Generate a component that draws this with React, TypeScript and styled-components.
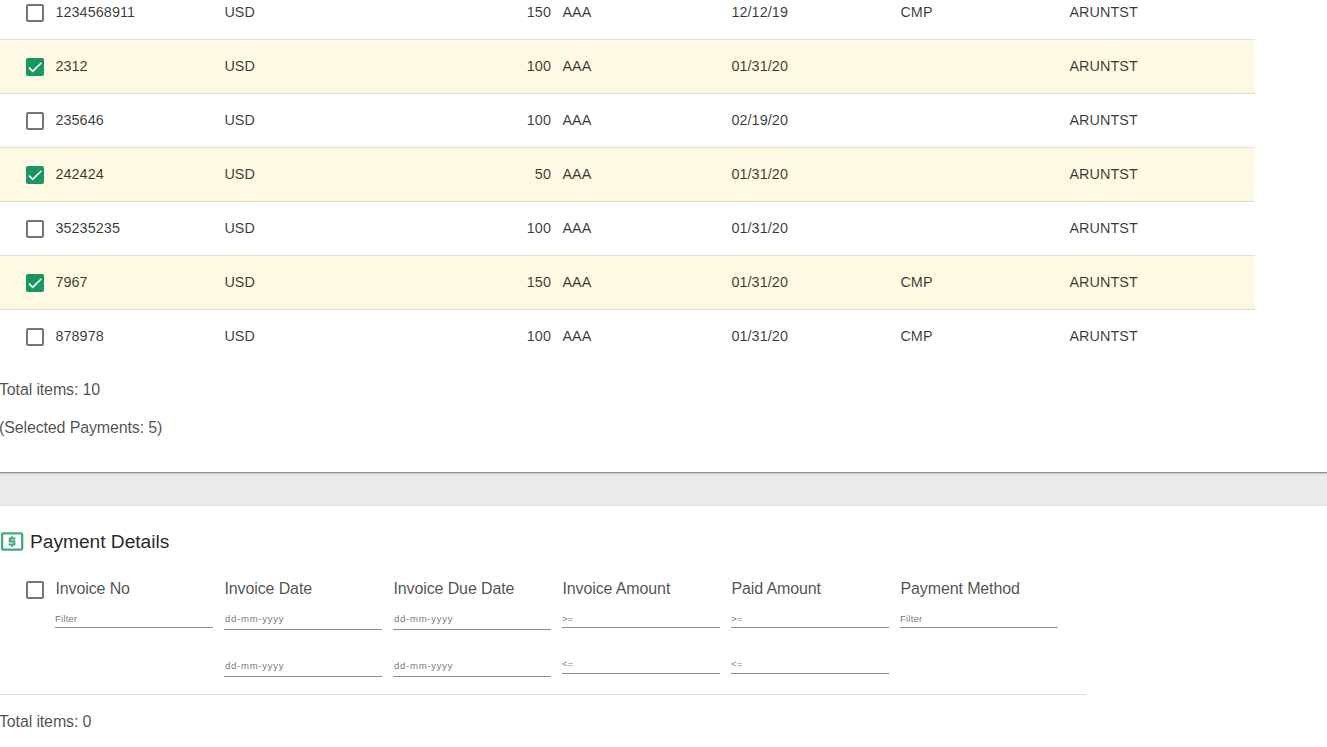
import React from 'react';
import styled, { createGlobalStyle } from 'styled-components';

const GlobalStyle = createGlobalStyle`
  * { box-sizing: border-box; }
  body {
    margin: 0;
    overflow: hidden;
    background: #eaeaea;
    color: rgba(0, 0, 0, 0.87);
    font-family: "Liberation Sans", Arial, sans-serif;
  }
`;

const Page = styled.main`
  height: 747px;
  overflow: hidden;
  display: flex;
  flex-direction: column;
  gap: 34px;
`;

const Card = styled.section<{ $height: number }>`
  flex: none;
  height: ${(p) => p.$height}px;
  overflow: clip;
  background: #fff;
  box-shadow: 0 1px 1px 0 rgba(0, 0, 0, 0.3), 0 1px 3px 0 rgba(0, 0, 0, 0.2);
`;

const Table = styled.div`
  width: 1255px;
  margin-top: -14px;
`;

const Row = styled.div<{ $selected: boolean; $last: boolean }>`
  display: grid;
  grid-template-columns: 55px repeat(7, 169px);
  height: 54px;
  padding-bottom: 1px;
  align-items: center;
  font-size: 14.4px;
  letter-spacing: 0.07px;
  color: rgba(0, 0, 0, 0.78);
  background: ${(p) => (p.$selected ? '#fef9e3' : '#fff')};
  border-bottom: 1px solid ${(p) => (p.$last ? 'transparent' : 'rgba(0, 0, 0, 0.12)')};
`;

const Cell = styled.span<{ $right?: boolean }>`
  padding: 0 11px 0 0.4px;
  text-align: ${(p) => (p.$right ? 'right' : 'left')};
`;

const CheckBox = styled.span<{ $checked?: boolean; $top?: number }>`
  width: 18px;
  height: 18px;
  margin: ${(p) => p.$top ?? 2}px 0 0 26px;
  display: flex;
  border-radius: 2px;
  border: ${(p) => (p.$checked ? 'none' : '2px solid #757575')};
  background: ${(p) => (p.$checked ? '#1a9664' : 'transparent')};
`;

const Summary = styled.p`
  margin: 0 0 0 -1px;
  height: 38px;
  line-height: 38px;
  font-size: 16px;
  letter-spacing: -0.14px;
  color: rgba(0, 0, 0, 0.7);
`;

const Totals = styled.div<{ $top: number }>`
  padding-top: ${(p) => p.$top}px;
`;

const Title = styled.h2`
  margin: 0;
  padding-top: 21px;
  height: 68px;
  display: flex;
  align-items: flex-start;
  gap: 6px;
  font-size: 19.2px;
  font-weight: 400;
  line-height: 30px;
  letter-spacing: -0.03px;

  svg {
    flex: none;
    margin-top: 3px;
  }
`;

const Filters = styled.div`
  width: 1086px;
  height: 121px;
  display: grid;
  grid-template-columns: 55px repeat(6, 169px);
  border-bottom: 1px solid rgba(0, 0, 0, 0.12);
`;

const FilterColumn = styled.div`
  width: 158px;
`;

const Label = styled.div`
  height: 32px;
  padding-left: 0.5px;
  line-height: 30px;
  font-size: 16px;
  letter-spacing: -0.12px;
  color: rgba(0, 0, 0, 0.7);
  white-space: nowrap;
`;

type FieldKind = 'text' | 'number' | 'date';

const fieldHeight = { text: 22, number: 22, date: 24 };
const fieldGap = { text: 24, number: 24, date: 23 };

const Field = styled.div<{ $kind: FieldKind; $second: boolean }>`
  height: ${(p) => fieldHeight[p.$kind]}px;
  margin-bottom: ${(p) => fieldGap[p.$kind]}px;
  padding-left: ${(p) => (p.$kind === 'date' ? 1 : 0)}px;
  border-bottom: 1px solid #8c8c8c;
  font-size: 9.6px;
  line-height: ${(p) => (p.$kind === 'number' && p.$second ? 24 : 26)}px;
  letter-spacing: ${(p) => (p.$kind === 'date' ? 0.7 : 0.2)}px;
  color: rgba(0, 0, 0, 0.58);
`;

const Check = () => (
  <CheckBox $checked>
    <svg width="18" height="18" viewBox="0 0 24 24" fill="none" stroke="#fff" strokeWidth="2.1">
      <path d="M4 12.9 9 17.9 20.5 6.4" />
    </svg>
  </CheckBox>
);

const CashIcon = () => (
  <svg width="24" height="24" viewBox="0 0 24 24" fill="none" stroke="#40ac80">
    <rect x="2.1" y="3.4" width="20.1" height="16.2" rx="1.2" strokeWidth="2.3" />
    <path d="M15.5 8.5H9.8V11.4H14.3V14.5H8.6M12 6.2V8.5M12 14.5V16.8" strokeWidth="2.1" />
  </svg>
);

const payments = [
  { id: '1234568911', amount: '150', date: '12/12/19', status: 'CMP', selected: false },
  { id: '2312', amount: '100', date: '01/31/20', status: '', selected: true },
  { id: '235646', amount: '100', date: '02/19/20', status: '', selected: false },
  { id: '242424', amount: '50', date: '01/31/20', status: '', selected: true },
  { id: '35235235', amount: '100', date: '01/31/20', status: '', selected: false },
  { id: '7967', amount: '150', date: '01/31/20', status: 'CMP', selected: true },
  { id: '878978', amount: '100', date: '01/31/20', status: 'CMP', selected: false },
];

const columns: { label: string; kind: FieldKind; hints: string[] }[] = [
  { label: 'Invoice No', kind: 'text', hints: ['Filter'] },
  { label: 'Invoice Date', kind: 'date', hints: ['dd-mm-yyyy', 'dd-mm-yyyy'] },
  { label: 'Invoice Due Date', kind: 'date', hints: ['dd-mm-yyyy', 'dd-mm-yyyy'] },
  { label: 'Invoice Amount', kind: 'number', hints: ['>=', '<='] },
  { label: 'Paid Amount', kind: 'number', hints: ['>=', '<='] },
  { label: 'Payment Method', kind: 'text', hints: ['Filter'] },
];

export default function App() {
  return (
    <>
      <GlobalStyle />
      <Page>
        <Card $height={472}>
          <Table>
            {payments.map((p, i) => (
              <Row key={p.id} $selected={p.selected} $last={i === payments.length - 1}>
                {p.selected ? <Check /> : <CheckBox />}
                <Cell>{p.id}</Cell>
                <Cell>USD</Cell>
                <Cell $right>{p.amount}</Cell>
                <Cell>AAA</Cell>
                <Cell>{p.date}</Cell>
                <Cell>{p.status}</Cell>
                <Cell>ARUNTST</Cell>
              </Row>
            ))}
          </Table>
          <Totals $top={7}>
            <Summary>Total items: 10</Summary>
            <Summary>(Selected Payments: 5)</Summary>
          </Totals>
        </Card>
        <Card $height={260}>
          <Title>
            <CashIcon />
            Payment Details
          </Title>
          <Filters>
            <CheckBox $top={7} />
            {columns.map((c) => (
              <FilterColumn key={c.label}>
                <Label>{c.label}</Label>
                {c.hints.map((h, i) => (
                  <Field key={i} $kind={c.kind} $second={i > 0}>
                    {h}
                  </Field>
                ))}
              </FilterColumn>
            ))}
          </Filters>
          <Totals $top={8}>
            <Summary>Total items: 0</Summary>
          </Totals>
        </Card>
      </Page>
    </>
  );
}
